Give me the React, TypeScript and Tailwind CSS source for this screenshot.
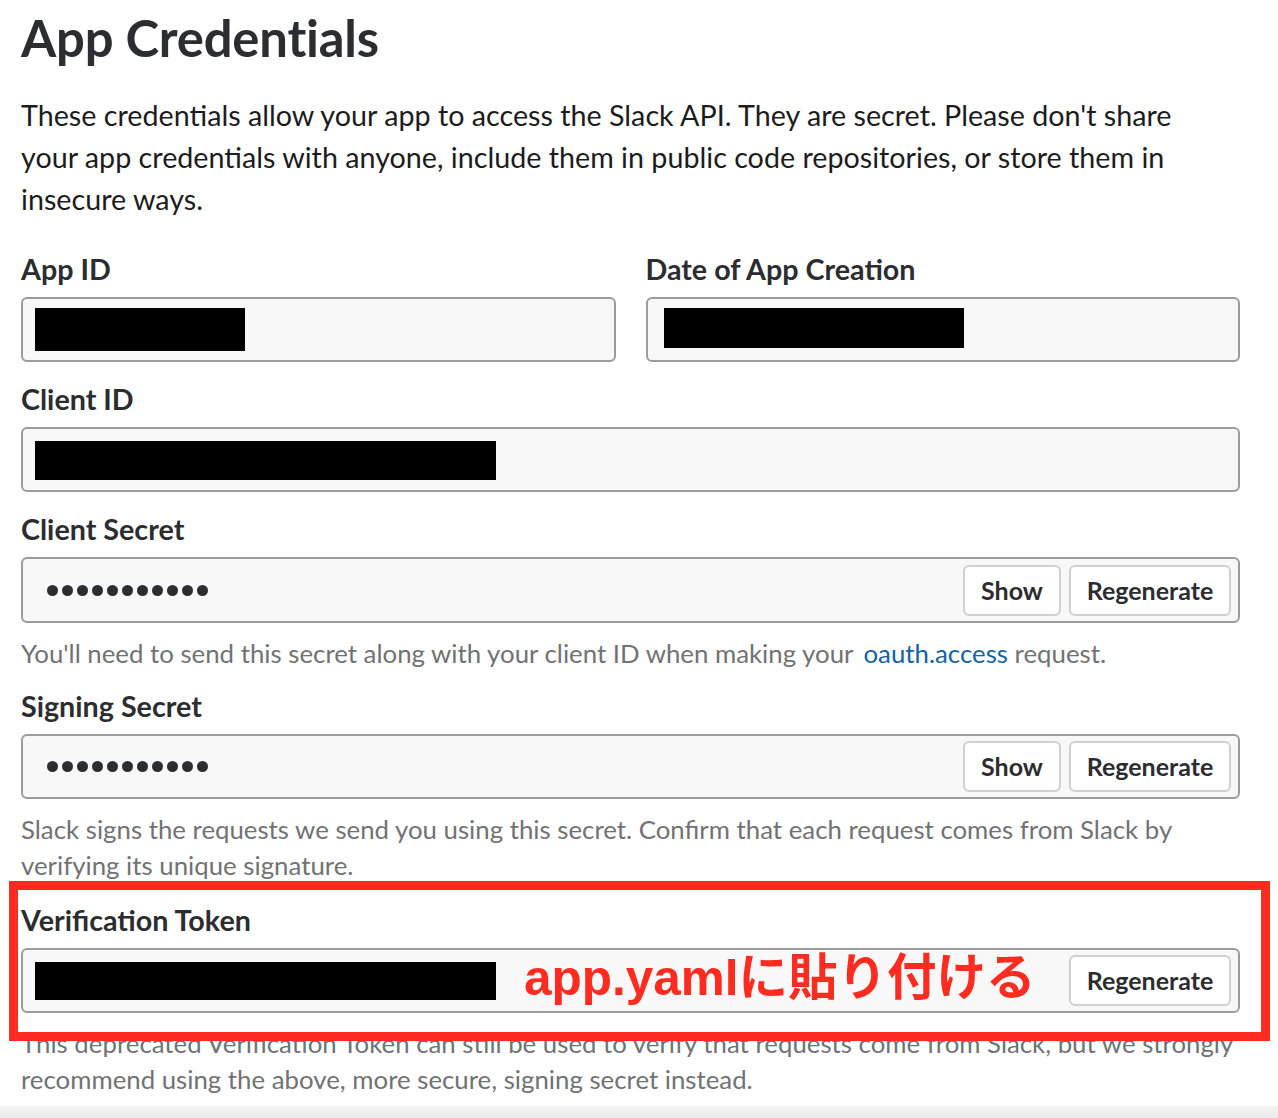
import React from 'react';

const Redacted = ({ w, h, mt }: { w: string; h: string; mt: string }) => (
  <div className={`bg-black ${w} ${h} ${mt}`} />
);

function Dots() {
  return (
    <div className="flex items-center gap-[4px] pl-[24px]">
      {Array.from({ length: 11 }).map((_, i) => (
        <span key={i} className="block w-[11px] h-[11px] rounded-full bg-[#2c2d30]" />
      ))}
    </div>
  );
}

function Btn({ children, w }: { children: React.ReactNode; w: string }) {
  return (
    <button
      className={`${w} h-[51px] rounded-[6px] border-2 border-[#d0d0d0] bg-white text-[25px] font-bold text-[#2c2d30] leading-none`}
    >
      {children}
    </button>
  );
}

function Label({ children }: { children: React.ReactNode }) {
  return (
    <div className="pt-[19px] mb-[10px] h-[55px] text-[28.7px] leading-[36px] font-bold text-[#2c2d30]">
      {children}
    </div>
  );
}

function SecretBox({ showBtn = true, h, children }: { showBtn?: boolean; h: string; children: React.ReactNode }) {
  return (
    <div className={`flex items-center justify-between ${h} rounded-[6px] border-2 border-[#9c9c9c] bg-[#f8f8f8] pr-[7px]`}>
      {children}
      <div className="flex gap-[8px]">
        {showBtn && <Btn w="w-[98px]">Show</Btn>}
        <Btn w="w-[162px]">Regenerate</Btn>
      </div>
    </div>
  );
}

export default function App() {
  return (
    <div className="relative w-[1278px] h-[1118px] overflow-hidden bg-white font-['Lato',sans-serif] text-[#1d1c1d]">
      <div className="pl-[21px] w-[1240px]">
        <h1 className="pt-[6px] text-[50.8px] leading-[64px] font-bold text-[#2c2d30] tracking-[-0.2px]">App Credentials</h1>
        <p className="mt-[24px] max-w-[1200px] text-[28.7px] leading-[42px] text-[#1d1c1d]">
          These credentials allow your app to access the Slack API. They are secret. Please don't share your app
          credentials with anyone, include them in public code repositories, or store them in insecure ways.
        </p>

        {/* App ID + date */}
        <div className="grid grid-cols-2 gap-[30px]">
          <div>
            <div className="pt-[31px] mb-[10px] h-[67px] text-[28.7px] leading-[36px] font-bold text-[#2c2d30]">App ID</div>
            <div className="h-[65px] rounded-[6px] border-2 border-[#9c9c9c] bg-[#f8f8f8] pl-[12px] pt-[9px]">
              <div className="bg-black w-[210px] h-[43px]" />
            </div>
          </div>
          <div>
            <div className="pt-[31px] mb-[10px] h-[67px] text-[28.7px] leading-[36px] font-bold text-[#2c2d30]">Date of App Creation</div>
            <div className="h-[65px] rounded-[6px] border-2 border-[#9c9c9c] bg-[#f8f8f8] pl-[16px] pt-[9px]">
              <div className="bg-black w-[300px] h-[40px]" />
            </div>
          </div>
        </div>

        <Label>Client ID</Label>
        <div className="h-[65px] rounded-[6px] border-2 border-[#9c9c9c] bg-[#f8f8f8] pl-[12px]">
          <Redacted w="w-[461px]" h="h-[39px]" mt="mt-[12px]" />
        </div>

        <Label>Client Secret</Label>
        <SecretBox h="h-[66px]">
          <Dots />
        </SecretBox>
        <p className="mt-[12px] text-[25.8px] leading-[36px] text-[#717274]">
          You'll need to send this secret along with your client ID when making your{' '}
          <span className="pl-[4px] text-[#1264a3]">oauth.access</span> request.
        </p>

        <div className="pt-[17px] mb-[10px] h-[53px] text-[28.7px] leading-[36px] font-bold text-[#2c2d30]">Signing Secret</div>
        <SecretBox h="h-[65px]">
          <Dots />
        </SecretBox>
        <p className="mt-[12px] text-[25.8px] leading-[36px] text-[#717274]">
          Slack signs the requests we send you using this secret. Confirm that each request comes from Slack by
          verifying its unique signature.
        </p>

        <Label>Verification Token</Label>
        <SecretBox showBtn={false} h="h-[65px]">
          <div className="pl-[12px]">
            <div className="bg-black w-[461px] h-[38px]" />
          </div>
        </SecretBox>
        <p className="mt-[12px] w-[1240px] text-[25.8px] leading-[36px] text-[#717274]">
          This deprecated Verification Token can still be used to verify that requests come from Slack, but we strongly
          recommend using the above, more secure, signing secret instead.
        </p>
      </div>

      <div className="absolute left-0 right-0 bottom-0 h-[12px] bg-gradient-to-b from-[#f4f4f4] to-[#e9e9e9]" />

      {/* annotation */}
      <div className="absolute left-[9px] top-[881px] w-[1261px] h-[160px] border-[9px] border-[#fe2b20]" />
      <div className="absolute left-[524px] top-[946px] text-[49.5px] leading-[64px] font-bold text-[#fe2b20] font-['Liberation_Sans','Noto_Sans_CJK_JP',sans-serif]">
        app.yamlに貼り付ける
      </div>
    </div>
  );
}
